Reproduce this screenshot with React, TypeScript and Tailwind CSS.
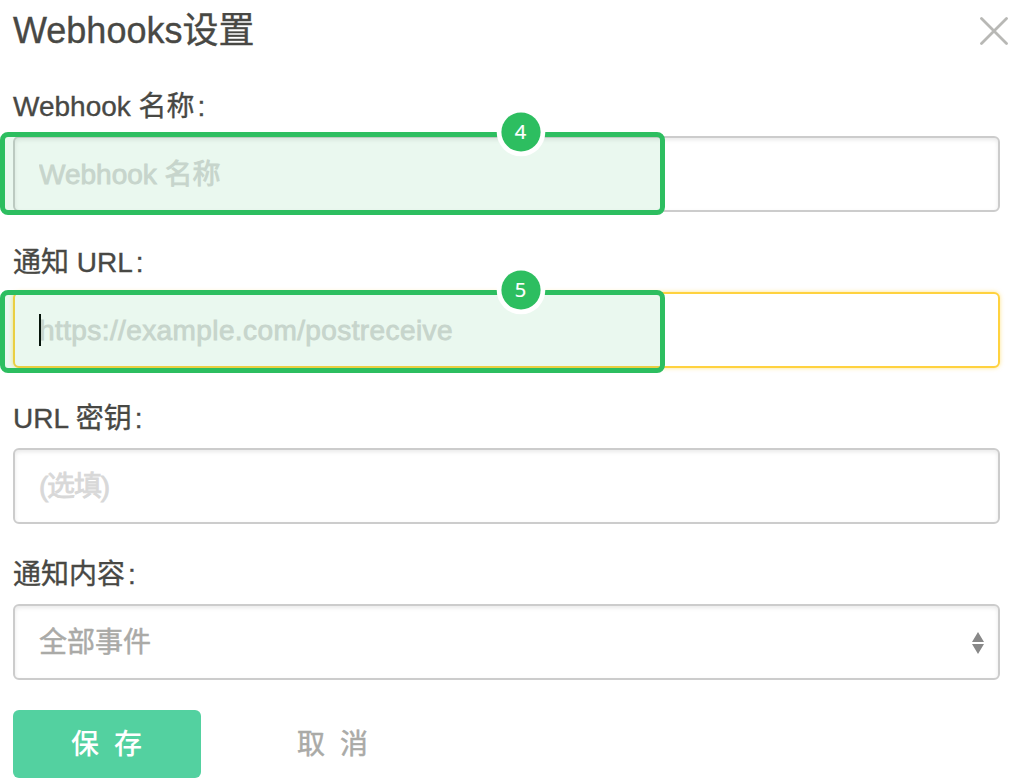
import type { ReactNode } from "react";

const inputBase =
  "block h-[76px] w-[987px] rounded-[6px] border-2 bg-white pl-6 pr-6 pt-[2px] text-[28px] outline-none placeholder:text-[#d8d8d8] placeholder:opacity-100 placeholder:[-webkit-text-stroke:0.8px_#d8d8d8]";
const plain = "border-[#cccccc] shadow-[inset_0_2px_4px_rgba(0,0,0,0.09)]";

function Field({ label, children }: { label: string; children: ReactNode }) {
  return (
    <div className="mb-[30px] h-[126px]">
      <div className="h-[50px] pt-px text-[28px] leading-[40px] text-[#484844] [-webkit-text-stroke:0.35px_#484844]">
        {label}
        <span className="ml-[3px]">:</span>
      </div>
      <div className="relative">{children}</div>
    </div>
  );
}

function Marker({ n, className }: { n: number; className: string }) {
  return (
    <div
      className={`pointer-events-none absolute -left-[13px] h-[83px] w-[665px] rounded-[8px] border-[5px] border-[#2dbe60] bg-[#2dbe60]/10 ${className}`}
    >
      <svg width="50" height="50" viewBox="0 0 50 50" className="absolute -top-[30px] left-[491px]">
        <circle cx="25" cy="25" r="24.3" fill="white" />
        <circle cx="25" cy="25" r="19.6" fill="#2dbe60" />
      </svg>
      <div className="absolute -top-[30px] left-[491px] flex h-[50px] w-[50px] items-center justify-center pr-px font-['Noto_Sans',sans-serif] text-[20px] leading-none text-white [-webkit-text-stroke:0.2px_white]">
        {n}
      </div>
    </div>
  );
}

export default function App() {
  return (
    <main className="h-[781px] w-[1019px] overflow-hidden bg-white pl-[13px] font-['Liberation_Sans','Noto_Sans_CJK_SC',sans-serif]">
      <header className="flex h-[86px] items-start justify-between pr-[11px]">
        <h1 className="pt-[6px] text-[36px] leading-[50px] text-[#484844] [-webkit-text-stroke:0.35px_#484844]">
          Webhooks设置
        </h1>
        <button type="button" aria-label="关闭" className="mt-[17px]">
          <svg width="28" height="28" viewBox="0 0 28 28" className="block">
            <path d="M1.5 1.5 26.5 26.5M26.5 1.5 1.5 26.5" stroke="#b8b8b5" strokeWidth="2.8" strokeLinecap="round" />
          </svg>
        </button>
      </header>

      <Field label="Webhook 名称">
        <input className={`${inputBase} ${plain}`} placeholder="Webhook 名称" />
        <Marker n={4} className="-top-[4px]" />
      </Field>

      <Field label="通知 URL">
        <div
          className={`${inputBase} flex items-center border-[#ffd23f] shadow-[0_0_4px_rgba(255,210,63,0.6)]`}
        >
          <span className="relative mb-[2px] h-8 w-[2px] bg-black" />
          <span className="-ml-[2px] tracking-[0.4px] text-[#d8d8d8] [-webkit-text-stroke:0.8px_#d8d8d8]">
            https://example.com/postreceive
          </span>
        </div>
        <Marker n={5} className="-top-[2px]" />
      </Field>

      <Field label="URL 密钥">
        <input className={`${inputBase} ${plain} tracking-[-1.2px]`} placeholder="(选填)" />
      </Field>

      <Field label="通知内容">
        <div className={`${inputBase} ${plain} flex items-center justify-between !pr-[14px]`}>
          <span className="text-[#aaaaa7] [-webkit-text-stroke:0.5px_#aaaaa7]">全部事件</span>
          <svg width="12" height="22" viewBox="0 0 12 22">
            <path d="M6 0 12 10H0ZM0 12H12L6 22Z" fill="#888888" />
          </svg>
        </div>
      </Field>

      <div className="flex h-[68px] items-stretch">
        <button
          type="button"
          className="w-[188px] rounded-[6px] bg-[#53d1a0] pt-[2px] pr-px text-[28px] font-medium text-white"
        >
          保<span className="inline-block w-[15px]" />存
        </button>
        <button
          type="button"
          className="ml-[96px] pt-[2px] text-[28px] text-[#aaaaa7] [-webkit-text-stroke:0.5px_#aaaaa7]"
        >
          取<span className="inline-block w-[15px]" />消
        </button>
      </div>
    </main>
  );
}
